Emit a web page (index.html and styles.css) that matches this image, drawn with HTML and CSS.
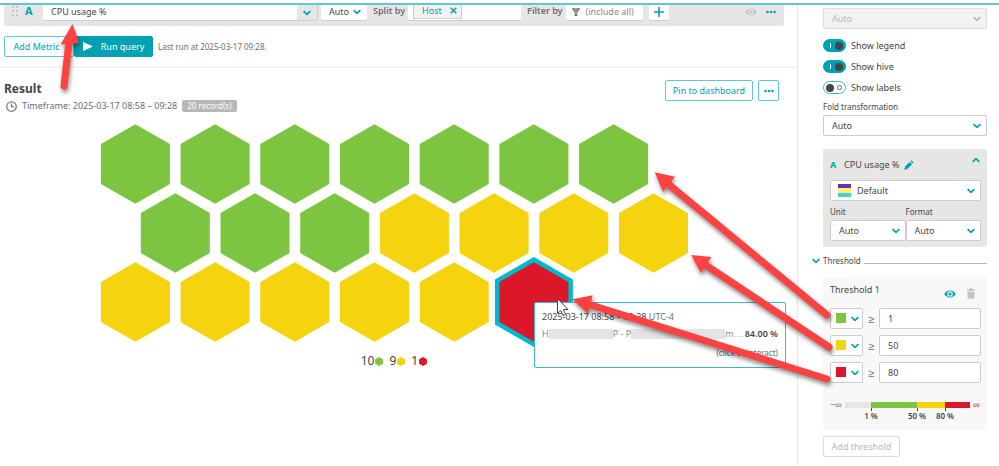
FILE: index.html
```html
<!DOCTYPE html>
<html lang="en">

<head>
    <meta charset="UTF-8">
    <meta name="viewport" content="width=device-width, initial-scale=1.0">
    <title>Data explorer</title>
    <link rel="stylesheet" href="styles.css">
</head>

<body>
    <!-- Shared icons -->
    <svg class="defs" width="0" height="0" aria-hidden="true">
        <symbol id="chevron" viewBox="0 0 8 6">
            <path d="M0.6 1.2 L4 4.4 L7.4 1.2" fill="none" stroke="currentColor" stroke-width="1.7" />
        </symbol>
        <symbol id="dots" viewBox="0 0 10 4">
            <circle cx="1.5" cy="2" r="1.3" fill="currentColor" />
            <circle cx="5" cy="2" r="1.3" fill="currentColor" />
            <circle cx="8.5" cy="2" r="1.3" fill="currentColor" />
        </symbol>
        <symbol id="eye" viewBox="0 0 12 8">
            <path d="M0.3 4 C2.5 -0.6 9.5 -0.6 11.7 4 C9.5 8.6 2.5 8.6 0.3 4 Z M6 1.2 A2.8 2.8 0 1 0 6 6.8 A2.8 2.8 0 1 0 6 1.2 Z" fill="currentColor" fill-rule="evenodd" />
            <circle cx="6" cy="4" r="1.6" fill="currentColor" />
        </symbol>
        <symbol id="hex" viewBox="-35 -40 70 80">
            <path d="M0 -40 L35 -20 V20 L0 40 L-35 20 V-20 Z" fill="currentColor" />
        </symbol>
    </svg>

    <div class="topline"></div>

    <div class="page">
        <main class="main">
            <div class="query">
                <svg class="grip" width="6" height="10" viewBox="0 0 6 10">
                    <path d="M0 1h2M4 1h2M0 5h2M4 5h2M0 9h2M4 9h2" stroke="#bdbdbd" stroke-width="1.4" />
                </svg>
                <span class="letter">A</span>
                <div class="combo">
                    <input class="combo-input" type="text" value="CPU usage %" aria-label="Metric">
                    <button class="combo-button" aria-label="Open metrics"><svg width="8" height="6"><use href="#chevron" /></svg></button>
                </div>
                <div class="select query-auto">
                    <select aria-label="Aggregation">
                        <option>Auto</option>
                    </select>
                    <svg class="arrow" width="8" height="6"><use href="#chevron" /></svg>
                </div>
                <label class="query-label" for="split">Split by</label>
                <div class="split">
                    <span class="chip">Host
                        <button class="chip-remove" aria-label="Remove Host"><svg width="7" height="7" viewBox="0 0 7 7"><path d="M0.7 0.7 L6.3 6.3 M6.3 0.7 L0.7 6.3" stroke="currentColor" stroke-width="1.5" /></svg></button>
                    </span>
                    <input id="split" class="split-input" type="text">
                </div>
                <label class="query-label" for="filter">Filter by</label>
                <div class="filter">
                    <svg width="8" height="8" viewBox="0 0 8 8"><path d="M0.6 0.8 H7.4 L4.8 4 V7.4 H3.2 V4 Z M2 2.4 H6" fill="none" stroke="#6d6d6d" stroke-width="1.1" /></svg>
                    <input id="filter" class="filter-input" type="text" placeholder="(include all)">
                </div>
                <button class="add" aria-label="Add filter"><svg width="10" height="10" viewBox="0 0 10 10"><path d="M5 0 V10 M0 5 H10" stroke="currentColor" stroke-width="1.6" /></svg></button>
                <button class="icon-button query-eye" aria-label="Hide metric"><svg width="12" height="8"><use href="#eye" /></svg></button>
                <button class="icon-button" aria-label="More"><svg width="10" height="4"><use href="#dots" /></svg></button>
            </div>

            <div class="actions">
                <button class="button add-metric">Add Metric</button>
                <button class="button run"><svg width="10" height="9" viewBox="0 0 10 9"><path d="M0 0 L10 4.5 L0 9 Z" fill="currentColor" /></svg>Run query</button>
                <span class="last-run">Last run at 2025-03-17 09:28.</span>
            </div>

            <section class="result">
                <div class="result-head">
                    <div>
                        <h1>Result</h1>
                        <p class="timeframe">
                            <svg width="11" height="11" viewBox="0 0 11 11"><circle cx="5.5" cy="5.5" r="4.8" fill="none" stroke="#6d6d6d" stroke-width="1.1" /><path d="M5.5 2.3 V5.8 H8.2" fill="none" stroke="#6d6d6d" stroke-width="1.1" /></svg>
                            <span>Timeframe: 2025-03-17 08:58 – 09:28</span>
                            <span class="records">20 record(s)</span>
                        </p>
                    </div>
                    <div class="result-buttons">
                        <button class="button pin">Pin to dashboard</button>
                        <button class="button more" aria-label="More actions"><svg width="10" height="4"><use href="#dots" /></svg></button>
                    </div>
                </div>

                <svg class="hive" width="600" height="226" viewBox="0 0 600 226" role="img" aria-label="CPU usage by host">
                    <defs>
                        <path id="cell" d="M0 -39.8 L34.5 -20 V20 L0 39.8 L-34.5 20 V-20 Z" />
                    </defs>
                    <g fill="#7dc540">
                        <use href="#cell" x="41.4" y="40" />
                        <use href="#cell" x="121.1" y="40" />
                        <use href="#cell" x="200.8" y="40" />
                        <use href="#cell" x="280.5" y="40" />
                        <use href="#cell" x="360.2" y="40" />
                        <use href="#cell" x="439.9" y="40" />
                        <use href="#cell" x="519.6" y="40" />
                        <use href="#cell" x="81.3" y="109" />
                        <use href="#cell" x="161" y="109" />
                        <use href="#cell" x="240.7" y="109" />
                    </g>
                    <g fill="#f5d30f">
                        <use href="#cell" x="320.4" y="109" />
                        <use href="#cell" x="400.1" y="109" />
                        <use href="#cell" x="479.8" y="109" />
                        <use href="#cell" x="559.5" y="109" />
                        <use href="#cell" x="41.4" y="178" />
                        <use href="#cell" x="121.1" y="178" />
                        <use href="#cell" x="200.8" y="178" />
                        <use href="#cell" x="280.5" y="178" />
                        <use href="#cell" x="360.2" y="178" />
                    </g>
                    <path d="M439.9 133 L478.9 155.4 V200.6 L439.9 223 L400.9 200.6 V155.4 Z" fill="#00b9cc" />
                    <use href="#cell" x="439.9" y="178" fill="#dc172a" />
                </svg>

                <div class="legend">
                    <span class="legend-item">10<svg class="green" width="8" height="9"><use href="#hex" /></svg></span>
                    <span class="legend-item">9<svg class="yellow" width="8" height="9"><use href="#hex" /></svg></span>
                    <span class="legend-item">1<svg class="red" width="8" height="9"><use href="#hex" /></svg></span>
                </div>

                <div class="tooltip">
                    <p class="tooltip-time">2025-03-17 08:58 – 09:28 <span>UTC-4</span></p>
                    <p class="tooltip-row">
                        <span>H</span><i class="mask"></i><span>P - P</span><i class="mask mask-wide"></i><span>m</span>
                        <i class="leader"></i>
                        <strong>84.00 %</strong>
                    </p>
                    <p class="tooltip-hint">(click to interact)</p>
                </div>
            </section>
        </main>

        <aside class="sidebar">
            <div class="select disabled">
                <select aria-label="Shape" disabled>
                    <option>Auto</option>
                </select>
                <svg class="arrow" width="8" height="6"><use href="#chevron" /></svg>
            </div>

            <div class="switches">
                <label class="switch"><input type="checkbox" checked>Show legend</label>
                <label class="switch"><input type="checkbox" checked>Show hive</label>
                <label class="switch"><input type="checkbox">Show labels</label>
            </div>

            <label class="field-label" for="fold">Fold transformation</label>
            <div class="select">
                <select id="fold">
                    <option>Auto</option>
                </select>
                <svg class="arrow" width="8" height="6"><use href="#chevron" /></svg>
            </div>

            <div class="metric-card">
                <div class="metric-head">
                    <span class="letter">A</span>
                    <span>CPU usage %</span>
                    <svg class="pencil" width="10" height="10" viewBox="0 0 10 10"><path d="M0.3 9.7 L1.1 6.6 L5.8 1.9 L8.1 4.2 L3.4 8.9 Z M6.5 1.2 L7.4 0.3 L9.7 2.6 L8.8 3.5 Z" fill="currentColor" /></svg>
                    <button class="icon-button collapse" aria-label="Collapse"><svg width="8" height="6"><use href="#chevron" /></svg></button>
                </div>
                <div class="select palette">
                    <svg class="palette-icon" width="13" height="13" viewBox="0 0 13 13"><path d="M0 0h13v4H0z" fill="#6f2da8" /><path d="M0 4h13v5H0z" fill="#ffee7c" /><path d="M0 9h13v4H0z" fill="#40d2e0" /></svg>
                    <select aria-label="Color palette">
                        <option>Default</option>
                    </select>
                    <svg class="arrow" width="8" height="6"><use href="#chevron" /></svg>
                </div>
                <div class="pair">
                    <div>
                        <label class="field-label" for="unit">Unit</label>
                        <div class="select">
                            <select id="unit">
                                <option>Auto</option>
                            </select>
                            <svg class="arrow" width="8" height="6"><use href="#chevron" /></svg>
                        </div>
                    </div>
                    <div>
                        <label class="field-label" for="format">Format</label>
                        <div class="select">
                            <select id="format">
                                <option>Auto</option>
                            </select>
                            <svg class="arrow" width="8" height="6"><use href="#chevron" /></svg>
                        </div>
                    </div>
                </div>
            </div>

            <div class="divider">
                <svg width="8" height="6"><use href="#chevron" /></svg>
                <span>Threshold</span>
                <i></i>
            </div>

            <div class="threshold-card">
                <div class="threshold-head">
                    <span>Threshold 1</span>
                    <button class="icon-button" aria-label="Hide threshold"><svg width="12" height="8"><use href="#eye" /></svg></button>
                    <button class="icon-button trash" aria-label="Delete threshold"><svg width="8" height="11" viewBox="0 0 8 11"><path d="M0 1.5 H2.5 V0.3 H5.5 V1.5 H8 V3 H0 Z M0.6 3.8 H7.4 V10.7 H0.6 Z" fill="currentColor" /></svg></button>
                </div>
                <div class="threshold-row">
                    <div class="select color">
                        <i class="swatch green"></i>
                        <select aria-label="Color of first threshold"><option></option></select>
                        <svg class="arrow" width="8" height="6"><use href="#chevron" /></svg>
                    </div>
                    <span class="gte">≥</span>
                    <input class="value" type="text" value="1" aria-label="First threshold">
                </div>
                <div class="threshold-row">
                    <div class="select color">
                        <i class="swatch yellow"></i>
                        <select aria-label="Color of second threshold"><option></option></select>
                        <svg class="arrow" width="8" height="6"><use href="#chevron" /></svg>
                    </div>
                    <span class="gte">≥</span>
                    <input class="value" type="text" value="50" aria-label="Second threshold">
                </div>
                <div class="threshold-row">
                    <div class="select color">
                        <i class="swatch red"></i>
                        <select aria-label="Color of third threshold"><option></option></select>
                        <svg class="arrow" width="8" height="6"><use href="#chevron" /></svg>
                    </div>
                    <span class="gte">≥</span>
                    <input class="value" type="text" value="80" aria-label="Third threshold">
                </div>

                <div class="scale">
                    <span class="infinity">−∞</span>
                    <div class="band band-none"></div>
                    <div class="band band-green"><span>1 %</span></div>
                    <div class="band band-yellow"><span>50 %</span></div>
                    <div class="band band-red"><span>80 %</span></div>
                    <span class="infinity infinity-red">∞</span>
                </div>
            </div>

            <button class="button add-threshold" disabled>Add threshold</button>
        </aside>

        <!-- Arrows and mouse pointer over the page -->
        <svg class="annotations" width="999" height="466" viewBox="0 0 999 466" aria-hidden="true">
            <path d="M557.5 298.5 V313.5 L560.8 310.5 L563 315.5 L565.6 314.3 L563.4 309.5 H568 Z" fill="#fff" stroke="#444" stroke-width="1" />
            <g class="red-arrows" fill="#fe4141" stroke="#fe4141">
                <path d="M64 86 L69 42" stroke-width="7" stroke-linecap="round" />
                <path d="M72.5 24 L60.5 44.5 L79 43 Z" stroke="none" />
                <path d="M827 315 L667 183" stroke-width="7" stroke-linecap="round" />
                <path d="M654.7 172.3 L675 176.7 L663 191.7 Z" stroke="none" />
                <path d="M829 347 L704 264" stroke-width="7" stroke-linecap="round" />
                <path d="M691 255 L711.3 257 L701 273 Z" stroke="none" />
                <path d="M827 379 L588 304" stroke-width="7" stroke-linecap="round" />
                <path d="M572.3 299.3 L592.7 295.3 L588 313.7 Z" stroke="none" />
            </g>
        </svg>
    </div>
</body>

</html>
```
FILE: styles.css
```css
* {
    box-sizing: border-box;
}

body {
    margin: 0;
    font-family: "Noto Sans", sans-serif;
    font-size: 9px;
    line-height: 12px;
    color: #454646;
    background-color: #fff;
    overflow: hidden;
}

h1,
p {
    margin: 0;
}

button,
input,
select {
    font: inherit;
    color: inherit;
    margin: 0;
    padding: 0;
    border: none;
    background: none;
}

button {
    cursor: pointer;
}

svg {
    display: block;
    flex: none;
}

.defs {
    position: absolute;
}

.topline {
    height: 5px;
    border-bottom: 2px solid #5fc8d2;
}

.page {
    position: relative;
    display: flex;
}

.main {
    flex: 1;
    min-width: 0;
}

.green {
    color: #7dc540;
}

.yellow {
    color: #f5d30f;
}

.red {
    color: #dc172a;
}

.letter {
    font-size: 11px;
    font-weight: 700;
    color: #00a1b2;
}

.icon-button {
    display: flex;
    color: #00a1b2;
}

/* Buttons */
.button {
    display: flex;
    align-items: center;
    justify-content: center;
    height: 21px;
    border: 1px solid #5fc8d2;
    border-radius: 2px;
    background-color: #fff;
    color: #00a1b2;
}

/* Drop-downs */
.select {
    position: relative;
    height: 21px;
    color: #00a1b2;
}

.select select {
    appearance: none;
    display: block;
    width: 100%;
    height: 100%;
    padding: 0 8px;
    border: 1px solid #ccc;
    border-radius: 2px;
    background-color: #fff;
    color: #454646;
}

.select .arrow {
    position: absolute;
    right: 6px;
    top: 8px;
    pointer-events: none;
}

.select.disabled {
    color: #b7b7b7;
}

.select.disabled select {
    background-color: #f2f2f2;
    border-color: #dcdcdc;
    color: #b7b7b7;
    opacity: 1;
}

/* Query row */
.query {
    display: flex;
    align-items: flex-start;
    height: 21px;
    margin: 0 13px 0 4px;
    padding: 0 8px;
    background-color: #e6e6e6;
    border-radius: 0 0 2px 2px;
}

.query .grip {
    margin-top: 1px;
}

.query .letter {
    margin-left: 7px;
    width: 18px;
}

.combo,
.query-auto,
.split,
.filter,
.add {
    height: 16px;
    background-color: #fff;
    border-bottom: 1px solid #ccc;
    border-radius: 0 0 2px 2px;
}

.combo {
    display: flex;
    width: 275px;
}

.combo-input {
    flex: 1;
    min-width: 0;
    height: 13px;
    padding: 0 8px;
}

.combo-button {
    display: flex;
    align-items: center;
    justify-content: center;
    width: 21px;
    background-color: #e6e6e6;
    border-right: 1px solid #ccc;
    color: #00a1b2;
}

.query-auto {
    width: 46px;
    margin-left: 3px;
}

.query-auto select {
    height: 13px;
    border: none;
}

.query-auto .arrow {
    top: 4px;
}

.query-label {
    margin-left: 6px;
    font-weight: 600;
    color: #6d6d6d;
}

.split {
    display: flex;
    width: 113px;
    margin-left: 3px;
    padding-left: 5px;
}

.split-input,
.filter-input {
    flex: 1;
    min-width: 0;
}

.chip {
    display: flex;
    align-items: center;
    gap: 8px;
    height: 14px;
    padding: 0 4px 2px 8px;
    border: 1px solid #ccc;
    border-top: none;
    background-color: #f2f2f2;
    color: #00a1b2;
}

.chip-remove {
    color: #00a1b2;
}

.filter {
    display: flex;
    align-items: center;
    gap: 6px;
    width: 77px;
    margin-left: 3px;
    padding: 0 6px 2px;
}

.filter-input::placeholder {
    color: #898989;
}

.add {
    display: flex;
    align-items: center;
    justify-content: center;
    width: 20px;
    margin-left: 6px;
    padding-bottom: 1px;
    color: #00a1b2;
}

.query-eye {
    margin: 3px 9px 0 auto;
    color: #c4c4c4;
}

.query-eye + .icon-button {
    margin-top: 5px;
}

/* Run row */
.actions {
    display: flex;
    align-items: center;
    padding: 10px 4px 9px;
    border-bottom: 2px solid #f2f2f2;
}

.add-metric {
    width: 70px;
    padding-right: 5px;
}

.run {
    gap: 8px;
    width: 79px;
    border-color: #00a1b2;
    background-color: #00a1b2;
    color: #fff;
}

.last-run {
    margin-left: 5px;
    font-size: 8px;
    line-height: 10px;
    color: #6d6d6d;
}

/* Result */
.result {
    position: relative;
    padding: 12px 13px 0 4px;
}

.result-head {
    display: flex;
    justify-content: space-between;
    height: 44px;
}

h1 {
    font-size: 12px;
    line-height: 17px;
    font-weight: 700;
}

.timeframe {
    display: flex;
    align-items: center;
    gap: 5px;
    height: 18px;
    padding-left: 2px;
    color: #6d6d6d;
}

.records {
    padding: 0 5px;
    border-radius: 2px;
    background-color: #b7b7b7;
    color: #fff;
    font-size: 8px;
}

.result-buttons {
    display: flex;
    gap: 5px;
    padding-right: 5px;
}

.pin {
    width: 88px;
}

.more {
    width: 21px;
}

.hive {
    margin: 0 auto;
}

.legend {
    display: flex;
    justify-content: center;
    gap: 6px;
    padding-top: 3px;
    font-size: 12px;
    line-height: 16px;
}

.legend-item {
    display: flex;
    align-items: center;
    gap: 1px;
}

.tooltip {
    position: absolute;
    top: 234px;
    right: 11px;
    width: 252px;
    padding: 8px 7px;
    border: 1px solid #38bac7;
    border-radius: 2px;
    background-color: #fff;
    color: #898989;
}

.tooltip-time {
    color: #454646;
}

.tooltip-time span {
    color: #6d6d6d;
}

.tooltip-row {
    display: flex;
    align-items: center;
    margin: 5px 0 7px;
    white-space: nowrap;
}

.tooltip-row strong {
    font-weight: 600;
    color: #454646;
}

.mask {
    width: 64px;
    height: 10px;
    background-color: #e4e4e4;
}

.mask-wide {
    width: 94px;
}

.leader {
    flex: 1;
    margin: 4px 1px 0;
    border-top: 1px dotted #ccc;
}

.tooltip-hint {
    text-align: right;
    font-size: 8px;
    color: #6d6d6d;
}

/* Sidebar */
.sidebar {
    flex: none;
    width: 202px;
    min-height: calc(100vh - 5px);
    padding: 3px 12px 0 25px;
    border-left: 1px solid #e6e6e6;
}

.switches {
    display: flex;
    flex-direction: column;
    gap: 8px;
    padding: 10px 0 8px;
}

.switch {
    display: flex;
    align-items: center;
    gap: 5px;
    height: 13px;
}

.switch input {
    appearance: none;
    flex: none;
    display: flex;
    align-items: center;
    justify-content: space-between;
    width: 23px;
    height: 13px;
    padding: 0 2px;
    border: 1px solid #38bac7;
    border-radius: 7px;
}

.switch input::before {
    content: "";
    width: 8px;
    height: 8px;
    border-radius: 50%;
    background-color: #454646;
}

.switch input::after {
    content: "";
    width: 5px;
    height: 5px;
    margin-right: 1px;
    border: 1px solid #6d6d6d;
    border-radius: 50%;
    box-sizing: border-box;
}

.switch input:checked {
    flex-direction: row-reverse;
    background-color: #00a1b2;
    border-color: #00a1b2;
}

.switch input:checked::after {
    width: 1px;
    margin: 0 0 0 4px;
    border: none;
    border-radius: 0;
    background-color: #fff;
}

.field-label {
    display: block;
    height: 13px;
    font-size: 8px;
    line-height: 10px;
}

.metric-card {
    margin-top: 13px;
    padding: 9px 6px 6px 7px;
    border-radius: 2px;
    background-color: #e6e6e6;
}

.metric-head {
    display: flex;
    align-items: center;
    height: 14px;
    margin-bottom: 8px;
}

.metric-head .letter {
    width: 14px;
    font-size: 9px;
}

.pencil {
    margin-left: 5px;
    color: #00a1b2;
}

.collapse {
    margin: 0 1px 10px auto;
    transform: rotate(180deg);
}

.palette select {
    padding-left: 26px;
}

.palette-icon {
    position: absolute;
    left: 8px;
    top: 4px;
}

.pair {
    display: grid;
    grid-template-columns: 1fr 1fr;
    margin-top: 6px;
}

.divider {
    display: flex;
    align-items: center;
    gap: 3px;
    margin: 8px 0 10px -11px;
    font-size: 8px;
}

.divider svg {
    color: #00a1b2;
}

.divider i {
    flex: 1;
    margin-top: 4px;
    border-top: 1px solid #b7b7b7;
}

.threshold-card {
    padding: 7px 6px 5px 7px;
    border-radius: 2px;
    background-color: #f8f8f8;
}

.threshold-head {
    display: flex;
    align-items: center;
    gap: 11px;
    height: 19px;
    margin-bottom: 5px;
}

.threshold-head span {
    flex: 1;
    height: 19px;
}

.threshold-head .trash {
    margin-right: 6px;
    color: #c4c4c4;
}

.threshold-row {
    display: flex;
    align-items: center;
    margin-bottom: 6px;
}

.color {
    width: 33px;
}

.color .arrow {
    right: 4px;
}

.swatch {
    position: absolute;
    left: 6px;
    top: 5px;
    width: 10px;
    height: 10px;
    background-color: currentColor;
    pointer-events: none;
}

.gte {
    width: 16px;
    text-align: center;
    font-size: 11px;
    color: #6d6d6d;
}

.value {
    flex: 1;
    min-width: 0;
    height: 21px;
    padding: 0 8px;
    border: 1px solid #ccc;
    border-radius: 2px;
    background-color: #fff;
}

.scale {
    display: flex;
    align-items: center;
    height: 26px;
    margin-top: 16px;
    padding-bottom: 14px;
    font-size: 8px;
}

.infinity {
    width: 15px;
    font-size: 9px;
    color: #6d6d6d;
}

.infinity-red {
    width: 11px;
    padding-left: 3px;
    color: #dc172a;
}

.band {
    position: relative;
    height: 6px;
}

.band span {
    position: absolute;
    left: -15px;
    top: 6px;
    width: 30px;
    text-align: center;
    font-weight: 600;
    line-height: 10px;
}

.band span::before {
    content: "";
    display: block;
    width: 1px;
    height: 3px;
    margin: 0 auto;
    background-color: #454646;
}

.band-none {
    flex: 26;
    background-color: #e6e6e6;
}

.band-green {
    flex: 46;
    background-color: #7dc540;
}

.band-yellow {
    flex: 28;
    background-color: #f5d30f;
}

.band-red {
    flex: 25;
    background-color: #dc172a;
}

.add-threshold {
    width: 77px;
    margin-top: 6px;
    border-color: #dcdcdc;
    color: #b7b7b7;
}

/* Arrows drawn over everything */
.annotations {
    position: absolute;
    left: 0;
    top: -5px;
    pointer-events: none;
}

.red-arrows {
    filter: drop-shadow(1px 3px 2px rgba(0, 0, 0, 0.45));
}
```
